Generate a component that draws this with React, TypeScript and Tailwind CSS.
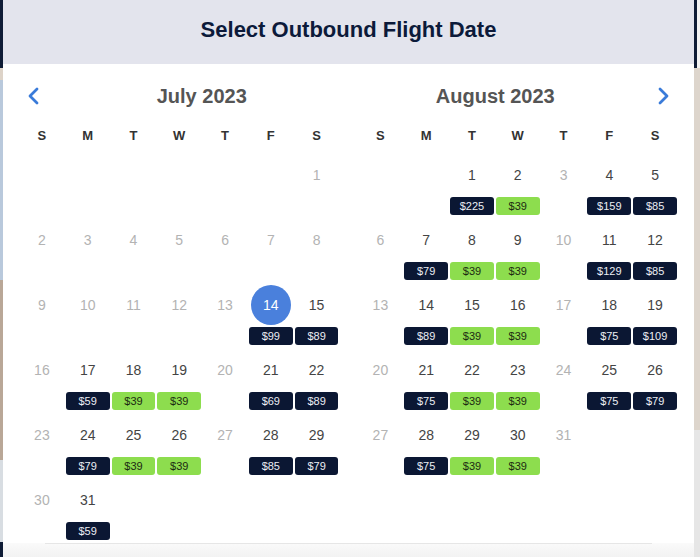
import React from "react";

type Day = { d: number; price?: string; green?: boolean; selected?: boolean };

const WEEK = ["S", "M", "T", "W", "T", "F", "S"];

// July 2023 starts on a Saturday, August 2023 on a Tuesday
const july: Day[] = [
  ...Array.from({ length: 13 }, (_, i) => ({ d: i + 1 })),
  { d: 14, price: "$99", selected: true },
  { d: 15, price: "$89" },
  { d: 16 },
  { d: 17, price: "$59" },
  { d: 18, price: "$39", green: true },
  { d: 19, price: "$39", green: true },
  { d: 20 },
  { d: 21, price: "$69" },
  { d: 22, price: "$89" },
  { d: 23 },
  { d: 24, price: "$79" },
  { d: 25, price: "$39", green: true },
  { d: 26, price: "$39", green: true },
  { d: 27 },
  { d: 28, price: "$85" },
  { d: 29, price: "$79" },
  { d: 30 },
  { d: 31, price: "$59" },
];

const august: Day[] = [
  { d: 1, price: "$225" },
  { d: 2, price: "$39", green: true },
  { d: 3 },
  { d: 4, price: "$159" },
  { d: 5, price: "$85" },
  { d: 6 },
  { d: 7, price: "$79" },
  { d: 8, price: "$39", green: true },
  { d: 9, price: "$39", green: true },
  { d: 10 },
  { d: 11, price: "$129" },
  { d: 12, price: "$85" },
  { d: 13 },
  { d: 14, price: "$89" },
  { d: 15, price: "$39", green: true },
  { d: 16, price: "$39", green: true },
  { d: 17 },
  { d: 18, price: "$75" },
  { d: 19, price: "$109" },
  { d: 20 },
  { d: 21, price: "$75" },
  { d: 22, price: "$39", green: true },
  { d: 23, price: "$39", green: true },
  { d: 24 },
  { d: 25, price: "$75" },
  { d: 26, price: "$79" },
  { d: 27 },
  { d: 28, price: "$75" },
  { d: 29, price: "$39", green: true },
  { d: 30, price: "$39", green: true },
  { d: 31 },
];

function Chevron({ dir }: { dir: "left" | "right" }) {
  return (
    <svg width="12" height="18" viewBox="0 0 12 18" fill="none">
      <polyline
        points={dir === "left" ? "10,2 3,9 10,16" : "2,2 9,9 2,16"}
        stroke="#3a7bd9"
        strokeWidth="2.8"
        strokeLinecap="round"
        strokeLinejoin="round"
      />
    </svg>
  );
}

function Cell({ day }: { day: Day }) {
  return (
    <div className="flex h-[65px] flex-col items-center">
      <div
        className={`flex h-10 w-10 items-center justify-center rounded-full text-[14px] ${
          day.selected
            ? "bg-[#4a80dc] text-white"
            : day.price
            ? "text-[#444]"
            : "text-[#b3b3b3]"
        }`}
      >
        {day.d}
      </div>
      {day.price && (
        <div
          className={`mt-[2px] flex h-[18px] w-[calc(100%-2px)] items-center justify-center rounded-[3px] text-[11px] ${
            day.green ? "bg-[#8ddd4e] text-[#1c2b12]" : "bg-[#0b1733] text-[#eceef3]"
          }`}
        >
          {day.price}
        </div>
      )}
    </div>
  );
}

function Month({
  title,
  offset,
  days,
  arrow,
}: {
  title: string;
  offset: number;
  days: Day[];
  arrow: "left" | "right";
}) {
  return (
    <div className="flex-1">
      <div className={`flex h-10 items-center ${arrow === "right" ? "flex-row-reverse" : ""}`}>
        <div className={`flex w-[45px] ${arrow === "left" ? "pl-[8px]" : "justify-end pr-[8px]"}`}>
          <Chevron dir={arrow} />
        </div>
        <div className="flex-1 text-center text-[20px] font-bold text-[#555]">{title}</div>
      </div>
      <div className="grid h-[39px] grid-cols-7 items-center">
        {WEEK.map((w, i) => (
          <div key={i} className="text-center text-[13px] font-bold text-[#333]">
            {w}
          </div>
        ))}
      </div>
      <div className="grid grid-cols-7">
        {Array.from({ length: offset }, (_, i) => (
          <div key={"e" + i} />
        ))}
        {days.map((day) => (
          <Cell key={day.d} day={day} />
        ))}
      </div>
    </div>
  );
}

export default function App() {
  return (
    <div className="flex h-[557px] w-[700px] overflow-hidden bg-white font-['Liberation_Sans',Arial,sans-serif]">
      {/* page behind the modal, left */}
      <div className="flex w-[3px] flex-col">
        <div className="h-[68px] bg-[#0f1c36]" />
        <div className="h-[12px] bg-[#ddd3c8]" />
        <div className="h-[200px] bg-[#b9c9dc]" />
        <div className="h-[180px] bg-[#b9a797]" />
        <div className="h-[82px] bg-[#d8dde2]" />
        <div className="flex-1 bg-[#0f1c36]" />
      </div>

      {/* modal */}
      <div className="flex flex-1 flex-col bg-white">
        <div className="flex h-16 items-center justify-center bg-[#e3e4ed] pb-[6px]">
          <h1 className="text-[22px] font-bold text-[#0c1a3a]">Select Outbound Flight Date</h1>
        </div>
        <div className="flex gap-[18px] px-4 pt-3">
          <Month title="July 2023" offset={6} days={july} arrow="left" />
          <Month title="August 2023" offset={2} days={august} arrow="right" />
        </div>
        <div className="-mt-0.5 flex-1 bg-gradient-to-b from-[#fafafa] to-[#f2f2f2]">
          <div className="mx-[42px] border-t border-[#e6e6e6]" />
        </div>
      </div>

      {/* page behind the modal, right */}
      <div className="flex w-[6px] flex-col">
        <div className="flex h-[68px]">
          <div className="w-[3px] bg-[#0f1c36]" />
          <div className="flex-1 bg-[#f3f3f3]" />
        </div>
        <div className="h-[362px] bg-[#ddd5cc]" />
        <div className="flex-1 bg-[#e6e6e6]" />
      </div>
    </div>
  );
}
